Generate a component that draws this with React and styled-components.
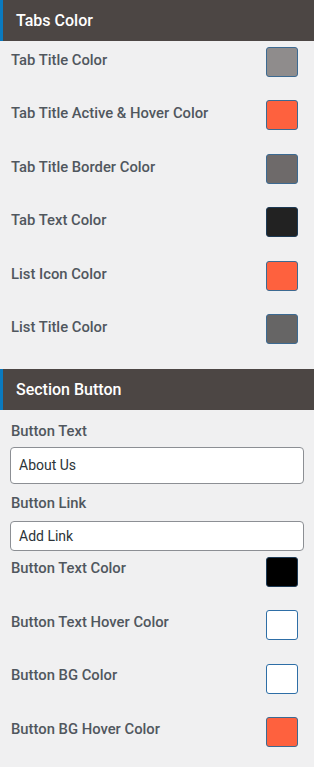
import React from "react";
import styled, { createGlobalStyle } from "styled-components";

const Global = createGlobalStyle`
  html, body { margin: 0; padding: 0; background: #f0f0f1; }
  body { font-family: Roboto, "Liberation Sans", Arial, sans-serif; -webkit-font-smoothing: antialiased; }
  * { box-sizing: border-box; }
`;

const Panel = styled.div`
  width: 314px;
  min-height: 767px;
  background: #f0f0f1;
  display: flex;
  flex-direction: column;
`;

const SectionHeader = styled.div`
  height: 41px;
  background: #4c4644;
  border-left: 3px solid #0a7abf;
  color: #ffffff;
  font-size: 16px;
  font-weight: 500;
  display: flex;
  align-items: center;
  padding-left: 13px;
  margin-top: ${(p) => p.$top || 0}px;
`;

const Body = styled.div`
  display: flex;
  flex-direction: column;
  padding: ${(p) => p.$pt || 0}px 10px 0 10px;
`;

const ColorRow = styled.div`
  display: flex;
  justify-content: space-between;
  align-items: flex-start;
  height: 30px;
  margin-bottom: ${(p) => p.$mb ?? 23.4}px;
`;

const Label = styled.div`
  font-size: 14.8px;
  font-weight: 500;
  color: #50575e;
  line-height: 18px;
  padding-top: ${(p) => p.$pt ?? 4}px;
  padding-left: 1px;
`;

const Swatch = styled.div`
  width: 32px;
  height: 30px;
  margin-right: 6px;
  border-radius: 3px;
  border: 1px solid ${(p) => p.$border || "#3c6a92"};
  background: ${(p) => p.$color};
`;

const FieldLabel = styled.div`
  font-size: 14.8px;
  font-weight: 500;
  color: #50575e;
  line-height: 18px;
  padding-left: 1px;
  margin-top: ${(p) => p.$mt || 0}px;
`;

const TextInput = styled.div`
  height: ${(p) => p.$h}px;
  margin-top: ${(p) => p.$mt || 0}px;
  border: 1px solid #8c8f94;
  border-radius: 4px;
  background: #ffffff;
  color: #2c3338;
  font-size: 14px;
  display: flex;
  align-items: center;
  padding-left: 8px;
  width: 294px;
`;

const tabs = [
  ["Tab Title Color", "#8f8c8c"],
  ["Tab Title Active & Hover Color", "#fe613e"],
  ["Tab Title Border Color", "#6e6a6a"],
  ["Tab Text Color", "#222222", "#1d3a55"],
  ["List Icon Color", "#fe613e"],
  ["List Title Color", "#666565"],
];

const buttons = [
  ["Button Text Color", "#000000", "#1d3a55"],
  ["Button Text Hover Color", "#ffffff", "#2e6ea6"],
  ["Button BG Color", "#ffffff", "#2e6ea6"],
  ["Button BG Hover Color", "#fe613e"],
];

export default function App() {
  return (
    <>
      <Global />
      <Panel>
        <SectionHeader>Tabs Color</SectionHeader>
        <Body $pt={6}>
          {tabs.map(([l, c, b], i) => (
            <ColorRow key={l} $mb={i === tabs.length - 1 ? 0 : 23.4}>
              <Label>{l}</Label>
              <Swatch $color={c} $border={b} />
            </ColorRow>
          ))}
        </Body>
        <SectionHeader $top={25}>Section Button</SectionHeader>
        <Body $pt={12}>
          <FieldLabel>Button Text</FieldLabel>
          <TextInput $h={37} $mt={7}>About Us</TextInput>
          <FieldLabel $mt={10}>Button Link</FieldLabel>
          <TextInput $h={30} $mt={9}>Add Link</TextInput>
          <div style={{ height: 6 }} />
          {buttons.map(([l, c, b]) => (
            <ColorRow key={l}>
              <Label $pt={2.5}>{l}</Label>
              <Swatch $color={c} $border={b} />
            </ColorRow>
          ))}
        </Body>
      </Panel>
    </>
  );
}
